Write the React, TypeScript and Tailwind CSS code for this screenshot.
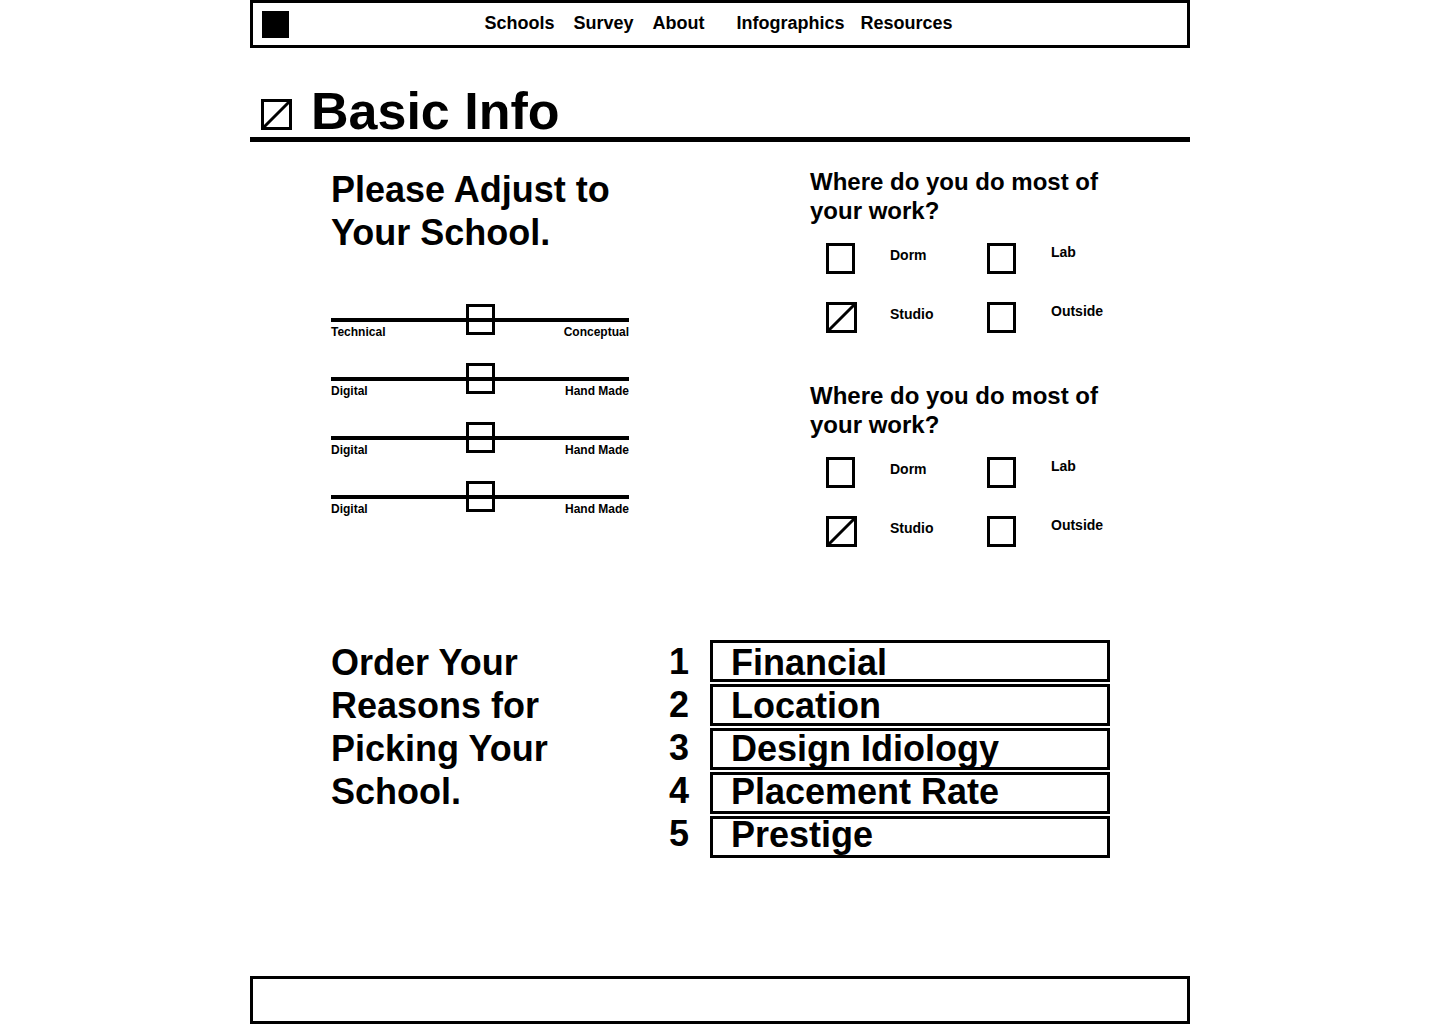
import React, { useState } from "react";

const navGroups = [
  ["Schools", "Survey", "About"],
  ["Infographics", "Resources"],
];

const scales = [
  ["Technical", "Conceptual"],
  ["Digital", "Hand Made"],
  ["Digital", "Hand Made"],
  ["Digital", "Hand Made"],
];

const reasons = ["Financial", "Location", "Design Idiology", "Placement Rate", "Prestige"];

type CheckboxProps = {
  id: string;
  label?: string;
  initial?: boolean;
};

function Checkbox({ id, label, initial = false }: CheckboxProps) {
  const [checked, setChecked] = useState(initial);
  return (
    <span className="grid w-[31px] shrink-0">
      <input
        id={id}
        type="checkbox"
        aria-label={label}
        checked={checked}
        onChange={(e) => setChecked(e.target.checked)}
        className="col-start-1 row-start-1 h-[31px] w-[29px] cursor-pointer appearance-none border-[3px] border-black bg-white checked:w-[31px]"
      />
      {checked && (
        <svg
          viewBox="0 0 31 31"
          className="pointer-events-none col-start-1 row-start-1 h-[31px] w-[31px]"
          aria-hidden="true"
        >
          <path d="M3 28 L28 3" stroke="black" strokeWidth="3" />
        </svg>
      )}
    </span>
  );
}

function Scale({ left, right }: { left: string; right: string }) {
  return (
    <div>
      <input
        type="range"
        min={0}
        max={100}
        defaultValue={50}
        aria-label={`${left} to ${right}`}
        className="block h-[31px] w-full cursor-pointer appearance-none bg-transparent [&::-webkit-slider-runnable-track]:h-1 [&::-webkit-slider-runnable-track]:bg-black [&::-webkit-slider-thumb]:-mt-[14px] [&::-webkit-slider-thumb]:h-[31px] [&::-webkit-slider-thumb]:w-[29px] [&::-webkit-slider-thumb]:appearance-none [&::-webkit-slider-thumb]:border-[3px] [&::-webkit-slider-thumb]:border-black [&::-webkit-slider-thumb]:bg-transparent"
      />
      <div className="-mt-[10px] flex justify-between text-xs leading-[14px]">
        <span>{left}</span>
        <span>{right}</span>
      </div>
    </div>
  );
}

function WorkQuestion({ name }: { name: string }) {
  return (
    <fieldset>
      <legend className="text-2xl leading-[29px]">Where do you do most of your work?</legend>
      <div className="mt-[18px] flex gap-[61px] pl-4">
        <div className="flex w-[100px] flex-col gap-7">
          <div className="flex gap-[33px]">
            <Checkbox id={`${name}-dorm`} />
            <label htmlFor={`${name}-dorm`} className="pt-1 text-sm leading-4">Dorm</label>
          </div>
          <div className="flex gap-[33px]">
            <Checkbox id={`${name}-studio`} initial />
            <label htmlFor={`${name}-studio`} className="pt-1 text-sm leading-4">Studio</label>
          </div>
        </div>
        <div className="flex flex-col gap-7">
          <div className="flex gap-[33px]">
            <Checkbox id={`${name}-lab`} />
            <label htmlFor={`${name}-lab`} className="pt-px text-sm leading-4">Lab</label>
          </div>
          <div className="flex gap-[33px]">
            <Checkbox id={`${name}-outside`} />
            <label htmlFor={`${name}-outside`} className="pt-px text-sm leading-4">Outside</label>
          </div>
        </div>
      </div>
    </fieldset>
  );
}

export default function App() {
  return (
    <div className="min-h-screen bg-white font-['Liberation_Sans',Arial,sans-serif] font-bold text-black">
      <div className="mx-auto flex min-h-screen w-full max-w-[940px] flex-col">
        <header className="grid min-h-12 grid-cols-[1fr_auto_1fr] border-[3px] border-black pt-2 pr-3 pl-[9px]">
          <a href="#home" aria-label="Home" className="h-[27px] w-[27px] bg-black" />
          <nav className="flex gap-8 text-lg leading-6">
            {navGroups.map((group, i) => (
              <div key={i} className={i === 0 ? "flex gap-[19px]" : "flex gap-4"}>
                {group.map((item) => (
                  <a key={item} href={`#${item.toLowerCase()}`}>{item}</a>
                ))}
              </div>
            ))}
          </nav>
        </header>

        <div className="mt-[37px] flex items-end gap-[19px] border-b-[5px] border-black pl-[11px]">
          <div className="pb-[7px]">
            <Checkbox id="basic-info" label="Basic Info complete" initial />
          </div>
          <h1 className="text-[52px] leading-[52px]">Basic Info</h1>
        </div>

        <main className="pr-20 pl-[81px]">
          <section className="mt-[25px] flex flex-wrap justify-between gap-y-12">
            <div className="w-[298px] pt-px">
              <h2 className="text-4xl leading-[43px]">Please Adjust to Your School.</h2>
              <div className="mt-[50px] flex flex-col gap-6">
                {scales.map(([left, right], i) => (
                  <Scale key={i} left={left} right={right} />
                ))}
              </div>
            </div>
            <div className="flex w-[300px] flex-col gap-12">
              <WorkQuestion name="first" />
              <WorkQuestion name="second" />
            </div>
          </section>

          <section className="mt-[93px] mb-12 flex flex-wrap justify-between gap-y-8 text-4xl leading-[43px]">
            <h2 className="w-60 pt-px">Order Your Reasons for Picking Your School.</h2>
            <div className="flex gap-[21px]">
              <div aria-hidden="true">
                {reasons.map((reason, i) => (
                  <div key={reason}>{i + 1}</div>
                ))}
              </div>
              <div className="grid w-[400px]">
                <div className="col-start-1 row-start-1 flex flex-col gap-0.5" aria-hidden="true">
                  {reasons.map((reason) => (
                    <div key={reason} className="h-[42px] border-[3px] border-black" />
                  ))}
                </div>
                <ol className="col-start-1 row-start-1 pt-px pl-[21px]">
                  {reasons.map((reason) => (
                    <li key={reason}>{reason}</li>
                  ))}
                </ol>
              </div>
            </div>
          </section>
        </main>

        <footer className="mt-auto h-12 border-[3px] border-black" />
      </div>
    </div>
  );
}
